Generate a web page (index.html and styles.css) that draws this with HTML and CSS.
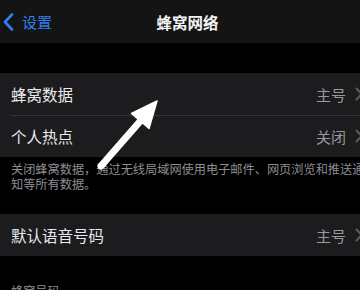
FILE: index.html
```html
<!DOCTYPE html>
<html lang="zh-CN">
<head>
    <meta charset="UTF-8">
    <meta name="viewport" content="width=device-width, initial-scale=1.0">
    <title>蜂窝网络</title>
    <link rel="stylesheet" href="styles.css">
</head>
<body>
    <div class="screen">
        <header class="nav-bar">
            <a class="back-btn" href="#">
                <svg class="back-icon" width="11" height="18" viewBox="0 0 11 18">
                    <polyline points="9,1.5 2,9 9,16.5" fill="none" stroke="currentColor" stroke-width="2.6" stroke-linecap="round" stroke-linejoin="round"/>
                </svg>
                <span>设置</span>
            </a>
            <h1 class="nav-title">蜂窝网络</h1>
            <div></div>
        </header>

        <section class="group">
            <div class="row">
                <span class="row-label">蜂窝数据</span>
                <span class="row-value">主号</span>
                <svg class="chevron" width="8" height="14" viewBox="0 0 8 14"><polyline points="1.5,1.5 6.5,7 1.5,12.5" fill="none" stroke="currentColor" stroke-width="2" stroke-linecap="round" stroke-linejoin="round"/></svg>
            </div>
            <div class="row">
                <span class="row-label">个人热点</span>
                <span class="row-value">关闭</span>
                <svg class="chevron" width="8" height="14" viewBox="0 0 8 14"><polyline points="1.5,1.5 6.5,7 1.5,12.5" fill="none" stroke="currentColor" stroke-width="2" stroke-linecap="round" stroke-linejoin="round"/></svg>
            </div>
        </section>
        <p class="group-footer">关闭蜂窝数据，通过无线局域网使用电子邮件、网页浏览和推送通知等所有数据。</p>

        <section class="group second">
            <div class="row">
                <span class="row-label">默认语音号码</span>
                <span class="row-value">主号</span>
                <svg class="chevron" width="8" height="14" viewBox="0 0 8 14"><polyline points="1.5,1.5 6.5,7 1.5,12.5" fill="none" stroke="currentColor" stroke-width="2" stroke-linecap="round" stroke-linejoin="round"/></svg>
            </div>
        </section>
        <p class="group-header">蜂窝号码</p>

        <!-- annotation arrow drawn over the list -->
        <svg class="arrow-overlay" width="360" height="290" viewBox="0 0 360 290">
            <line x1="101" y1="166" x2="143" y2="118" stroke="#fff" stroke-width="7" stroke-linecap="round"/>
            <polygon points="157,101 131.5,113.5 149,128.5" fill="#fff" stroke="#fff" stroke-width="1.5" stroke-linejoin="round"/>
        </svg>
    </div>
</body>
</html>
```

FILE: styles.css
```css
html, body {
    margin: 0;
    padding: 0;
    overflow: hidden;
    background-color: #000;
}

body {
    font-family: "Noto Sans CJK SC", "Noto Sans", sans-serif;
    color: #e9e9eb;
}

.screen {
    position: relative;
    width: 375px;
    height: 290px;
    background-color: #000;
}

.nav-bar {
    display: grid;
    grid-template-columns: 1fr auto 1fr;
    align-items: center;
    height: 43px;
    background-color: #141414;
}

.back-btn {
    display: flex;
    align-items: center;
    gap: 8px;
    padding-left: 3px;
    color: #2f7ff0;
    text-decoration: none;
    font-size: 15px;
    line-height: 20px;
}

.back-icon {
    display: block;
    margin-top: 1px;
}

.nav-title {
    margin: 0;
    font-size: 15.5px;
    font-weight: 700;
    color: #f2f2f2;
    line-height: 20px;
}

.group {
    margin-top: 30px;
    background-color: #1c1c1e;
}

.group.second {
    margin-top: 22px;
}

.row {
    display: flex;
    align-items: center;
    height: 42px;
    padding: 0 12px 0 11px;
    position: relative;
}

.row + .row::before {
    content: "";
    position: absolute;
    top: 0;
    left: 11px;
    right: 0;
    border-top: 1px solid #343436;
}

.row-label {
    flex-grow: 1;
    font-size: 15.5px;
}

.row-value {
    font-size: 15px;
    color: #98989d;
    margin-right: 9px;
}

.chevron {
    color: #5c5c60;
    display: block;
}

.group-footer {
    margin: 0;
    padding: 5px 5px 0 11px;
    font-size: 12.2px;
    line-height: 15px;
    color: #8e8e93;
}

.group-header {
    margin: 28px 0 0;
    padding-left: 11px;
    font-size: 12.2px;
    line-height: 15px;
    color: #8e8e93;
}

.arrow-overlay {
    position: absolute;
    top: 0;
    left: 0;
    pointer-events: none;
}
```
